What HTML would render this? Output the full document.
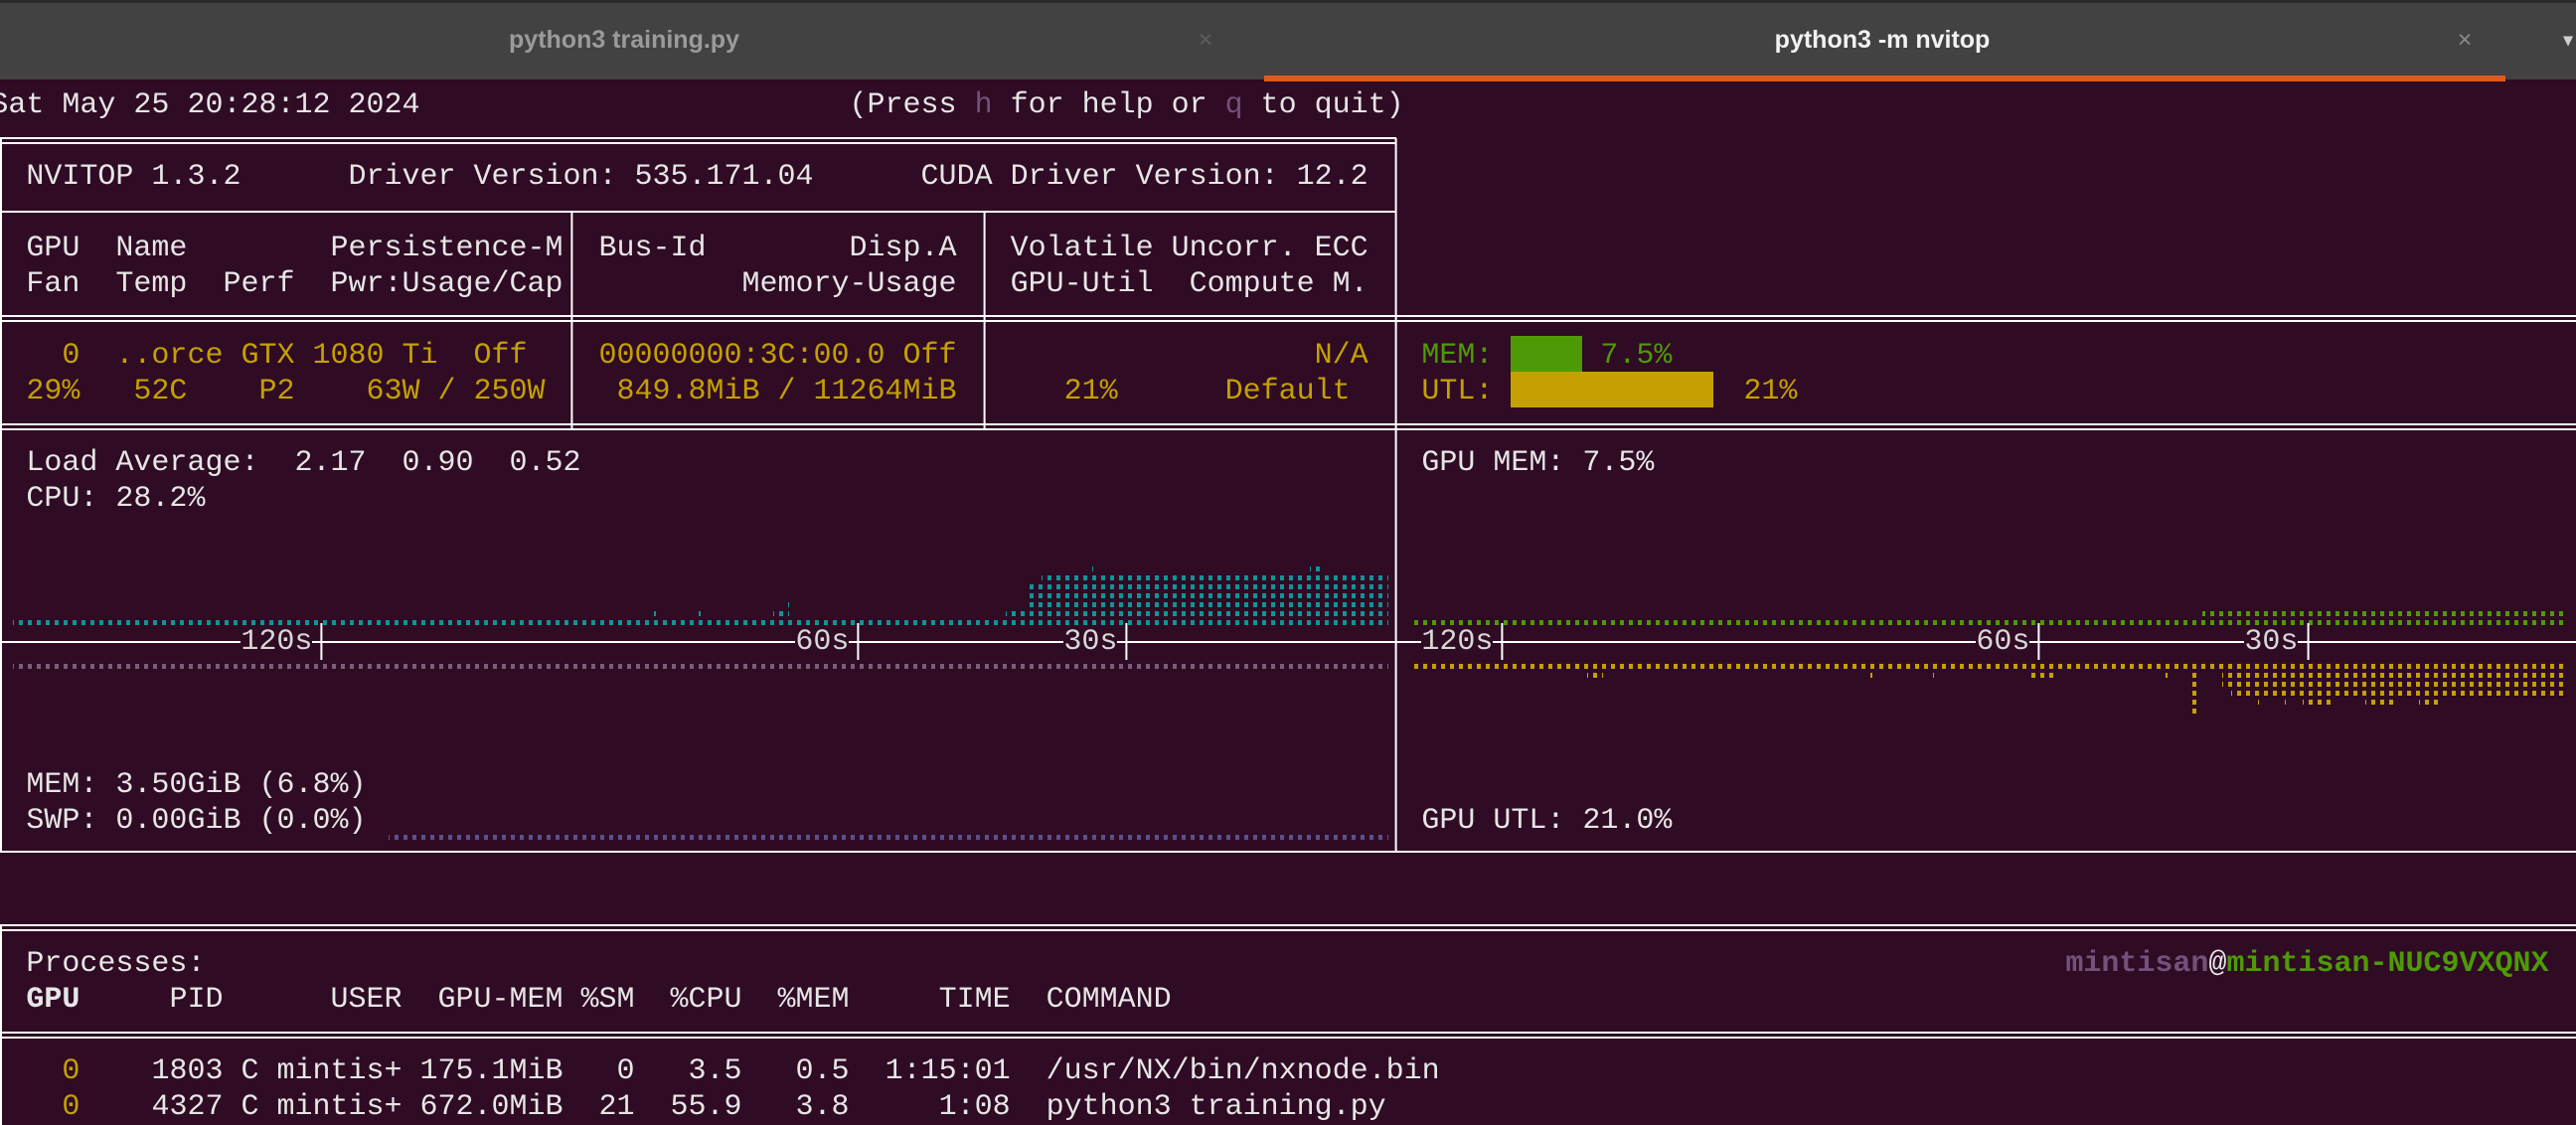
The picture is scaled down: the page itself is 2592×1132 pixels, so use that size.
<!DOCTYPE html>
<html><head><meta charset="utf-8"><style>
html,body{margin:0;padding:0;width:2592px;height:1132px;overflow:hidden;background:#2f0b24}
.tab{position:absolute;left:0;top:0;width:2592px;height:80px;background:#424242;border-top:3px solid #2a2a2a;box-sizing:border-box}
.tt{position:absolute;top:0;height:80px;line-height:80px;font-family:"Liberation Sans",sans-serif;font-weight:bold;font-size:25px;transform:translateX(-50%);white-space:nowrap}
.r{position:absolute;left:-9.6px;height:36px;line-height:36px;font-family:"Liberation Mono",monospace;font-size:30px;color:#e6e6e6;white-space:pre}
.a{position:absolute;height:36px;line-height:36px;font-family:"Liberation Mono",monospace;font-size:30px;color:#e6e6e6;white-space:pre}
.y{color:#c4a000}.g{color:#4e9a06}.p{color:#75507b}
</style></head><body>
<div class="tab"></div>
<div class="tt" style="left:628px;color:#9b9b9b">python3 training.py</div>
<div class="tt" style="left:1213px;color:#5e5e5e;font-weight:normal">×</div>
<div class="tt" style="left:1894px;color:#f2f2f2">python3 -m nvitop</div>
<div class="tt" style="left:2480px;color:#8a8a8a;font-weight:normal">×</div>
<div class="tt" style="left:2584px;color:#cfcfcf;font-size:18px">▾</div>
<div style="position:absolute;left:1272px;top:76px;width:1249px;height:6px;background:#e05a1e"></div>

<div class="r" style="top:88px">Sat May 25 20:28:12 2024                        (Press <span class="p">h</span> for help or <span class="p">q</span> to quit)</div>
<div class="r" style="top:160px">  NVITOP 1.3.2      Driver Version: 535.171.04      CUDA Driver Version: 12.2</div>
<div class="r" style="top:232px">  GPU  Name        Persistence-M  Bus-Id        Disp.A   Volatile Uncorr. ECC</div>
<div class="r" style="top:268px">  Fan  Temp  Perf  Pwr:Usage/Cap          Memory-Usage   GPU-Util  Compute M.</div>
<div class="r y" style="top:340px">    0  ..orce GTX 1080 Ti  Off    00000000:3C:00.0 Off                    N/A</div>
<div class="r y" style="top:376px">  29%   52C    P2    63W / 250W    849.8MiB / 11264MiB      21%      Default</div>
<div class="a g" style="top:340px;left:1430.4px">MEM:</div>
<div class="a g" style="top:340px;left:1610.4px">7.5%</div>
<div class="a y" style="top:376px;left:1430.4px">UTL:</div>
<div class="a y" style="top:376px;left:1754.4px">21%</div>
<div style="position:absolute;left:1520px;top:338px;width:72px;height:36px;background:#4e9a06"></div>
<div style="position:absolute;left:1520px;top:374px;width:204px;height:36px;background:#c4a000"></div>

<div class="r" style="top:448px">  Load Average:  2.17  0.90  0.52</div>
<div class="r" style="top:484px">  CPU: 28.2%</div>
<div class="a" style="top:448px;left:1430.4px">GPU MEM: 7.5%</div>
<div class="r" style="top:772px">  MEM: 3.50GiB (6.8%)</div>
<div class="r" style="top:808px">  SWP: 0.00GiB (0.0%)</div>
<div class="a" style="top:808px;left:1430.4px">GPU UTL: 21.0%</div>
<div class="a" style="top:628px;left:242.4px;color:#d8d8d8">120s</div>
<div class="a" style="top:628px;left:800.4px;color:#d8d8d8">60s</div>
<div class="a" style="top:628px;left:1070.4px;color:#d8d8d8">30s</div>
<div class="a" style="top:628px;left:1430.4px;color:#d8d8d8">120s</div>
<div class="a" style="top:628px;left:1988.4px;color:#d8d8d8">60s</div>
<div class="a" style="top:628px;left:2258.4px;color:#d8d8d8">30s</div>

<div class="r" style="top:952px">  Processes:</div>
<div class="a" style="top:952px;left:2078.4px"><span class="p" style="font-weight:bold">mintisan</span>@<span class="g" style="font-weight:bold">mintisan-NUC9VXQNX</span></div>
<div class="r" style="top:988px">  <b>GPU</b>     PID      USER  GPU-MEM %SM  %CPU  %MEM     TIME  COMMAND</div>
<div class="r" style="top:1060px">    <span class="y">0</span>    1803 C mintis+ 175.1MiB   0   3.5   0.5  1:15:01  /usr/NX/bin/nxnode.bin</div>
<div class="r" style="top:1096px">    <span class="y">0</span>    4327 C mintis+ 672.0MiB  21  55.9   3.8     1:08  python3 training.py</div>

<svg width="2592" height="1132" style="position:absolute;left:0;top:0" xmlns="http://www.w3.org/2000/svg">
<defs>
<pattern id="pc" patternUnits="userSpaceOnUse" x="0" y="3" width="9" height="9"><rect x="1" y="0" width="4" height="5" fill="#0e9597"/></pattern>
<pattern id="pg" patternUnits="userSpaceOnUse" x="0" y="3" width="9" height="9"><rect x="1" y="0" width="4" height="5" fill="#4e9a06"/></pattern>
<pattern id="py" patternUnits="userSpaceOnUse" x="0" y="2" width="9" height="9"><rect x="1" y="0" width="4" height="5" fill="#c4a000"/></pattern>
<pattern id="pp" patternUnits="userSpaceOnUse" x="0" y="2" width="9" height="9"><rect x="1" y="0" width="4" height="5" fill="#7a5c7e"/></pattern>
<pattern id="ps" patternUnits="userSpaceOnUse" x="0" y="3" width="9" height="9"><rect x="1" y="0" width="4" height="5" fill="#5b4f8f"/></pattern>
</defs>
<g fill="url(#pc)">
<rect x="13" y="624" width="1384" height="5"/>
<rect x="1012" y="615" width="385" height="5"/>
<rect x="654" y="615" width="6" height="5"/><rect x="699" y="615" width="6" height="5"/><rect x="778" y="615" width="16" height="5"/>
<rect x="788" y="606" width="6" height="5"/>
<rect x="1036" y="588" width="361" height="23"/>
<rect x="1048" y="579" width="349" height="5"/>
<rect x="1094" y="570" width="6" height="5"/><rect x="1318" y="570" width="12" height="5"/>
</g>
<rect x="13" y="668" width="1384" height="5" fill="url(#pp)"/>
<rect x="391" y="840" width="1006" height="5" fill="url(#ps)"/>
<g fill="url(#pg)">
<rect x="1418" y="624" width="1165" height="5"/>
<rect x="2216" y="615" width="367" height="5"/>
</g>
<g fill="url(#py)">
<rect x="1418" y="668" width="1165" height="5"/>
<rect x="1597" y="677" width="16" height="5"/><rect x="1878" y="677" width="6" height="5"/><rect x="1940" y="677" width="6" height="5"/>
<rect x="2039" y="677" width="32" height="5"/><rect x="2175" y="677" width="6" height="5"/>
<rect x="2202" y="677" width="12" height="41"/>
<rect x="2236" y="677" width="347" height="14"/>
<rect x="2245" y="695" width="338" height="5"/>
<rect x="2272" y="704" width="6" height="5"/><rect x="2299" y="704" width="6" height="5"/><rect x="2317" y="704" width="33" height="5"/><rect x="2380" y="704" width="30" height="5"/><rect x="2434" y="704" width="24" height="5"/>
</g>
<g stroke="#ffffff" stroke-width="2" fill="none">
<path d="M0 139H1405M0 144H1405"/>
<path d="M0 213H1405"/>
<path d="M0 318H2592M0 323H2592"/>
<path d="M0 427H2592M0 432H2592"/>
<path d="M0 857H2592"/>
<path d="M0 931H2592M0 936H2592"/>
<path d="M0 1039H2592M0 1044H2592"/>
<path d="M1 139V857M1404.6 139V857M575.4 213V432M990.6 213V432M1 931V1132"/>
<path d="M0 646H242M314 646H800M854 646H1070M1124 646H1404M1404 646H1430M1502 646H1988M2042 646H2258M2312 646H2592"/>
<path d="M323.4 627V664M863.4 627V664M1133.4 627V664M1511.4 627V664M2051.4 627V664M2322.6 627V664"/>
</g>
</svg>
</body></html>
